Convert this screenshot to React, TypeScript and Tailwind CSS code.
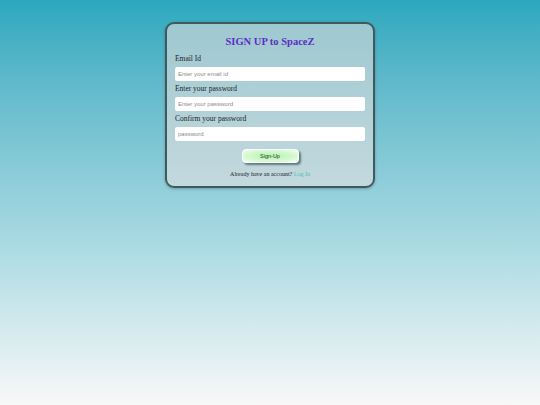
import React from "react";

const inputCls =
  "mt-[3px] block w-full h-[14px] rounded-[2px] bg-white px-[3px] text-[6px] font-['Liberation_Sans',sans-serif] outline-none placeholder:text-[#8a8a8a]";

const App = () => {
  return (
    <div className="min-h-[405px] w-full bg-gradient-to-b from-[#29a8bf] via-[#a9dae2] via-60% to-[#f8f8f8] flex justify-center pt-[22px] font-['Liberation_Serif',serif]">
      <div className="w-[210px] h-[166px] rounded-[9px] border-2 border-[#3f5a5f] bg-gradient-to-b from-[#9ec8d0] to-[#c3d9de] px-2 pt-[11px] shadow-[0_1px_3px_rgba(0,0,0,0.25)]">
        <h2 className="text-center text-[10.5px] leading-[14px] font-bold text-[#5b2ec4]">SIGN UP to SpaceZ</h2>

        <label className="block mt-[5px] text-[7.5px] leading-[10px] text-[#1b2427]">Email Id</label>
        <input className={inputCls} placeholder="Enter your email id" />

        <label className="block mt-[3px] text-[7.5px] leading-[10px] text-[#1b2427]">Enter your password</label>
        <input type="password" className={inputCls} placeholder="Enter your password" />

        <label className="block mt-[3px] text-[7.5px] leading-[10px] text-[#1b2427]">Confirm your password</label>
        <input type="password" className={inputCls} placeholder="password" />

        <div className="flex justify-center mt-[8px]">
          <button className="w-[57px] h-[14px] rounded-[4px] border border-white bg-[radial-gradient(ellipse_at_center,#b3f3ad_0%,#d4f9d0_60%,#f4fff2_100%)] shadow-[2px_2px_2px_rgba(40,60,60,0.6)] text-[5.5px] font-['Liberation_Sans',sans-serif] text-[#1d3a1d]">
            Sign-Up
          </button>
        </div>

        <p className="mt-[7px] text-center text-[6px] leading-[8px] text-[#1b2427]">
          Already have an account? <a className="text-[#3fc4b0]">Log In</a>
        </p>
      </div>
    </div>
  );
};

export default App;
